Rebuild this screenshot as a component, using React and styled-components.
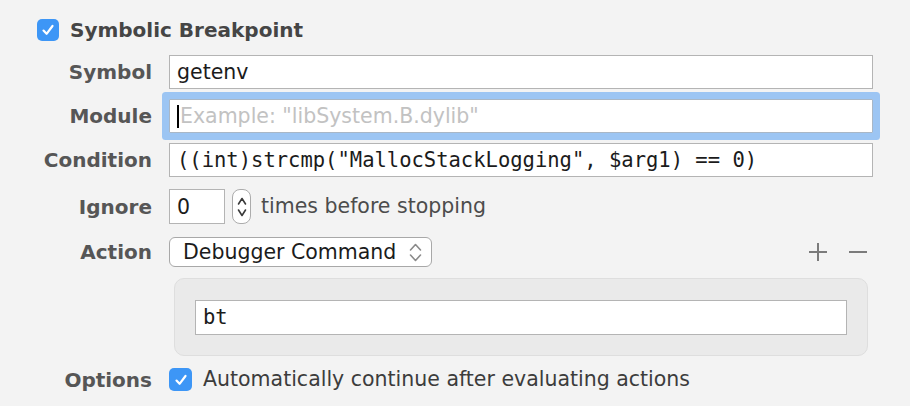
import React from "react";
import styled, { createGlobalStyle, css } from "styled-components";

const GlobalStyle = createGlobalStyle`
  html, body { margin: 0; padding: 0; background: #f3f3f3; }
  body { font-family: "DejaVu Sans", "Noto Sans", sans-serif; }
  * { box-sizing: border-box; }
`;

const Page = styled.div`
  width: 910px;
  height: 406px;
  padding-top: 19px;
  overflow: hidden;
  background: #f3f3f3;
`;

const TitleRow = styled.div`
  display: flex;
  align-items: center;
  gap: 11px;
  padding-left: 37px;
  height: 22px;
`;

const Title = styled.span`
  font-weight: bold;
  font-size: 20px;
  color: #454545;
  line-height: 1;
`;

const CheckBox = styled.span`
  width: ${(p) => p.$size || 22}px;
  height: ${(p) => p.$size || 22}px;
  border-radius: 5px;
  background: #3d96f6;
  display: inline-flex;
  align-items: center;
  justify-content: center;
  flex-shrink: 0;
`;

const Row = styled.div`
  display: flex;
  align-items: center;
  margin-top: ${(p) => p.$top}px;
`;

const Label = styled.div`
  width: 152px;
  margin-right: 17px;
  flex-shrink: 0;
  text-align: right;
  font-weight: bold;
  font-size: 20px;
  color: #565656;
  line-height: 1;
`;

const Content = styled.div`
  width: 704px;
  display: flex;
  align-items: center;
`;

const Field = styled.div`
  width: ${(p) => (p.$width ? `${p.$width}px` : "100%")};
  height: ${(p) => p.$height || 34}px;
  background: #fff;
  border: 1px solid #b4b4b4;
  padding: 0 7px;
  display: flex;
  align-items: center;
  font-size: 20.5px;
  color: #1b1b1b;
  white-space: pre;
  font-family: ${(p) =>
    p.$mono ? '"DejaVu Sans Mono", "Liberation Mono", monospace' : "inherit"};
  ${(p) =>
    p.$focused &&
    css`
      border-radius: 1px;
      border-color: #a9b7c6;
      box-shadow: 0 0 0 7px #9cc5f3;
    `}
`;

const Caret = styled.span`
  width: 2px;
  height: 23px;
  background: #000;
  margin-right: 1px;
  flex-shrink: 0;
`;

const Placeholder = styled.span`
  color: #c2c2c2;
`;

const Stepper = styled.div`
  width: 19px;
  height: 35px;
  margin-left: 7px;
  background: #fff;
  border: 1px solid #acacac;
  border-radius: 8px;
  display: flex;
  align-items: center;
  justify-content: center;
`;

const InlineText = styled.span`
  margin-left: 10px;
  font-size: 20.5px;
  color: #4c4c4c;
  line-height: 1;
`;

const Popup = styled.div`
  width: 263px;
  height: 30px;
  background: #fff;
  border: 1px solid #a8a8a8;
  border-radius: 6px;
  padding: 0 9px 0 13px;
  display: flex;
  align-items: center;
  justify-content: space-between;
  font-size: 20.5px;
  color: #1b1b1b;
`;

const IconGroup = styled.div`
  margin-left: auto;
  margin-right: 6px;
  display: flex;
  align-items: center;
  gap: 22px;
`;

const ActionBox = styled.div`
  width: 694px;
  height: 78px;
  margin-left: 5px;
  background: #eaeaea;
  border: 1px solid #dedede;
  border-radius: 10px;
  padding: 20px;
  display: flex;
  align-items: center;
`;

const OptionText = styled.span`
  margin-left: 11px;
  font-size: 20.5px;
  color: #3c3c3c;
  line-height: 1;
`;

const Check = () => (
  <svg width="14" height="14" viewBox="0 0 14 14">
    <path
      d="M2.5 7.6 L5.6 10.8 L11.5 3"
      fill="none"
      stroke="#fff"
      strokeWidth="2.2"
      strokeLinecap="round"
      strokeLinejoin="round"
    />
  </svg>
);

const UpDown = ({ color, w, h, gap }) => (
  <svg width={w} height={h} viewBox={`0 0 ${w} ${h}`}>
    <path
      d={`M1.5 ${h / 2 - gap / 2} L${w / 2} 1.5 L${w - 1.5} ${h / 2 - gap / 2}`}
      fill="none"
      stroke={color}
      strokeWidth="1.6"
      strokeLinecap="round"
      strokeLinejoin="round"
    />
    <path
      d={`M1.5 ${h / 2 + gap / 2} L${w / 2} ${h - 1.5} L${w - 1.5} ${h / 2 + gap / 2}`}
      fill="none"
      stroke={color}
      strokeWidth="1.6"
      strokeLinecap="round"
      strokeLinejoin="round"
    />
  </svg>
);

const Plus = () => (
  <svg width="18" height="18" viewBox="0 0 18 18">
    <path d="M9 0 V18 M0 9 H18" stroke="#7b7b7b" strokeWidth="2" />
  </svg>
);

const Minus = () => (
  <svg width="18" height="18" viewBox="0 0 18 18">
    <path d="M0 9 H18" stroke="#7b7b7b" strokeWidth="2" />
  </svg>
);

export default function App() {
  return (
    <>
      <GlobalStyle />
      <Page>
        <TitleRow>
          <CheckBox>
            <Check />
          </CheckBox>
          <Title>Symbolic Breakpoint</Title>
        </TitleRow>

        <Row $top={14}>
          <Label>Symbol</Label>
          <Content>
            <Field>getenv</Field>
          </Content>
        </Row>

        <Row $top={10}>
          <Label>Module</Label>
          <Content>
            <Field $focused>
              <Caret />
              <Placeholder>Example: "libSystem.B.dylib"</Placeholder>
            </Field>
          </Content>
        </Row>

        <Row $top={10}>
          <Label>Condition</Label>
          <Content>
            <Field $mono>((int)strcmp("MallocStackLogging", $arg1) == 0)</Field>
          </Content>
        </Row>

        <Row $top={12}>
          <Label>Ignore</Label>
          <Content>
            <Field $width={56} $height={35}>
              0
            </Field>
            <Stepper>
              <UpDown color="#3a3a3a" w={10} h={20} gap={6} />
            </Stepper>
            <InlineText>times before stopping</InlineText>
          </Content>
        </Row>

        <Row $top={13}>
          <Label>Action</Label>
          <Content>
            <Popup>
              <span>Debugger Command</span>
              <UpDown color="#8a8a8a" w={13} h={19} gap={5} />
            </Popup>
            <IconGroup>
              <Plus />
              <Minus />
            </IconGroup>
          </Content>
        </Row>

        <Row $top={11}>
          <Label />
          <Content>
            <ActionBox>
              <Field $mono $height={35}>
                bt
              </Field>
            </ActionBox>
          </Content>
        </Row>

        <Row $top={12}>
          <Label>Options</Label>
          <Content>
            <CheckBox $size={23}>
              <Check />
            </CheckBox>
            <OptionText>Automatically continue after evaluating actions</OptionText>
          </Content>
        </Row>
      </Page>
    </>
  );
}
